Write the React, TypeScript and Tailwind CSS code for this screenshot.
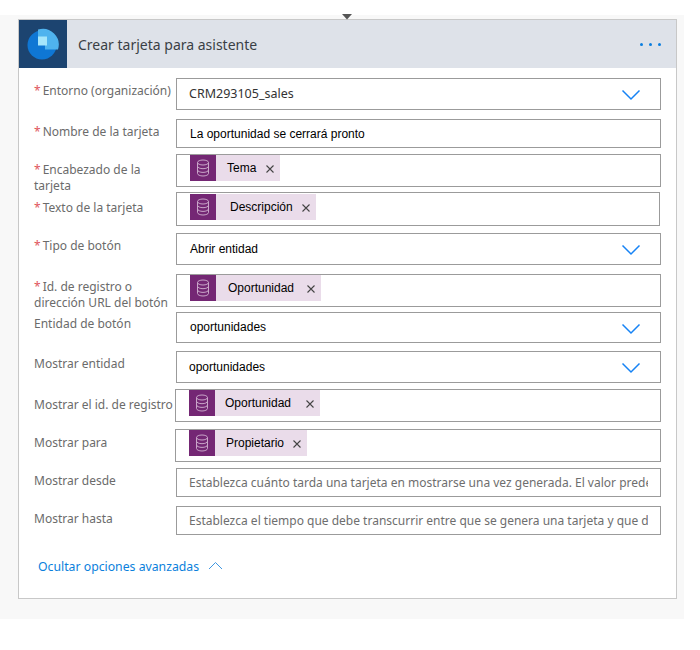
import type { ReactNode } from "react";

const labelFont = "font-['Noto_Sans',sans-serif] text-[12px] leading-4 text-[#6b6b6b]";
const valueFont = "font-['Liberation_Sans',Arial,sans-serif] text-[12px] text-black";

function Req() {
  return <span className="mr-[2px] text-[#e0555c]">*</span>;
}

function Chevron() {
  return (
    <svg width="20" height="12" viewBox="0 0 20 12" className="absolute top-[10px] right-[19px]" fill="none">
      <path d="M1.5 1.5 10 10l8.5-8.5" stroke="#1683f5" strokeWidth="1.5" />
    </svg>
  );
}

function DbIcon() {
  return (
    <svg width="14" height="18" viewBox="0 0 14 18" fill="none" stroke="#c9a6c9" strokeWidth="1">
      <ellipse cx="7" cy="3.5" rx="5.5" ry="2.5" />
      <path d="M1.5 3.5v11c0 1.4 2.5 2.5 5.5 2.5s5.5-1.1 5.5-2.5v-11" />
      <path d="M1.5 7.2c0 1.4 2.5 2.5 5.5 2.5s5.5-1.1 5.5-2.5" />
      <path d="M1.5 10.9c0 1.4 2.5 2.5 5.5 2.5s5.5-1.1 5.5-2.5" />
    </svg>
  );
}

function Chip({ text, className, pad }: { text: string; className: string; pad: string }) {
  return (
    <div className={`flex h-[26px] items-stretch bg-[#eadcea] ${className}`}>
      <div className="flex w-[26px] shrink-0 items-center justify-center bg-[#742774]">
        <DbIcon />
      </div>
      <span className={`flex-1 ${pad} ${valueFont} leading-[27px] text-[#111]`}>{text}</span>
      <svg width="10" height="10" viewBox="0 0 10 10" className="mt-[9px] mr-[5px]" stroke="#444" strokeWidth="1.1">
        <path d="M1.5 1.5l7 7M8.5 1.5l-7 7" />
      </svg>
    </div>
  );
}

function Row({
  label,
  className,
  labelClass,
  boxClass = "",
  narrow = false,
  children,
}: {
  label: ReactNode;
  className: string;
  labelClass: string;
  boxClass?: string;
  narrow?: boolean;
  children: ReactNode;
}) {
  return (
    <div className={`flex ${className}`}>
      <div className={`${narrow ? "w-[141px]" : "w-[142px]"} shrink-0 ${labelClass} ${labelFont}`}>{label}</div>
      <div className={`relative min-w-0 flex-1 border border-[#9b9b9b] bg-white ${boxClass}`}>{children}</div>
    </div>
  );
}

export default function App() {
  return (
    <div className="relative h-[650px] w-[700px] overflow-hidden bg-white pt-[15px]">
      <svg width="10" height="6" viewBox="0 0 10 6" className="absolute top-[14px] left-[342px]">
        <path d="M0 0h10L5 5.5z" fill="#555" />
      </svg>
      <div className="h-[604px] w-[684px] bg-[#f8f8f8] pt-[4px] pl-[18px]">
        <div className="h-[580px] w-[659px] border border-[#c8c8c8] bg-white">
          <div className="flex h-[48px] items-center bg-[#dee2e9]">
            <div className="flex h-[48px] w-[48px] items-center justify-center bg-[#1c4470]">
              <svg width="32" height="32" viewBox="0 0 32 32">
                <circle cx="15" cy="17" r="14.5" fill="#0f77d4" />
                <path d="M11 1.5a16 16 0 0 1 20 20H18v-8h-7z" fill="#4fb3ee" />
                <path d="M11 8.5h9v9h-9z" fill="#a6e6fb" />
              </svg>
            </div>
            <span className="ml-[11px] font-['Noto_Sans',sans-serif] text-[14px] text-[#3a3f45]">
              Crear tarjeta para asistente
            </span>
            <div className="mr-[15px] ml-auto flex gap-[6px]">
              <span className="h-[3px] w-[3px] rounded-full bg-[#0a7ee0]" />
              <span className="h-[3px] w-[3px] rounded-full bg-[#0a7ee0]" />
              <span className="h-[3px] w-[3px] rounded-full bg-[#0a7ee0]" />
            </div>
          </div>

          <div className="w-[642px] pt-[10px] pl-[15px]">
            <Row className="h-[32px]" labelClass="pt-[5px] whitespace-nowrap" label={<><Req />Entorno (organización)</>}>
              <span className="ml-[12px] font-['Noto_Sans',sans-serif] text-[12.5px] leading-[29px] text-[#333]">
                CRM293105_sales
              </span>
              <Chevron />
            </Row>
            <Row className="mt-[9px] h-[29px]" labelClass="pt-[5px]" label={<><Req />Nombre de la tarjeta</>}>
              <span className={`ml-[13px] ${valueFont} leading-[29px]`}>La oportunidad se cerrará pronto</span>
            </Row>
            <Row className="mt-[6px] h-[33px]" labelClass="pt-[8px]" boxClass="pl-[13px]" label={<><Req />Encabezado de la tarjeta</>}>
              <Chip text="Tema" className="w-[90px]" pad="pl-[11px]" />
            </Row>
            <Row className="mt-[5px] h-[34px]" labelClass="pt-[8px]" boxClass="mr-[1px] pt-[1px] pl-[13px]" label={<><Req />Texto de la tarjeta</>}>
              <Chip text="Descripción" className="w-[126px]" pad="pl-[14px]" />
            </Row>
            <Row className="mt-[7px] h-[32px]" labelClass="pt-[5px]" label={<><Req />Tipo de botón</>}>
              <span className={`ml-[13px] ${valueFont} leading-[30px]`}>Abrir entidad</span>
              <Chevron />
            </Row>
            <Row className="mt-[9px] h-[33px]" labelClass="pt-[5px]" boxClass="pl-[13px]" label={<><Req />Id. de registro o dirección URL del botón</>}>
              <Chip text="Oportunidad" className="w-[131px]" pad="pl-[12px]" />
            </Row>
            <Row className="mt-[5px] h-[31px]" labelClass="pt-[4px]" label="Entidad de botón">
              <span className={`ml-[13px] ${valueFont} leading-[27px]`}>oportunidades</span>
              <Chevron />
            </Row>
            <Row className="mt-[8px] h-[32px]" labelClass="pt-[5px]" label="Mostrar entidad">
              <span className={`ml-[12px] ${valueFont} leading-[31px]`}>oportunidades</span>
              <Chevron />
            </Row>
            <Row narrow className="mt-[6px] h-[33px]" labelClass="pt-[8px]" boxClass="pl-[13px]" label="Mostrar el id. de registro">
              <Chip text="Oportunidad" className="w-[131px]" pad="pl-[10px]" />
            </Row>
            <Row narrow className="mt-[7px] h-[33px]" labelClass="pt-[6px]" boxClass="pl-[13px]" label="Mostrar para">
              <Chip text="Propietario" className="w-[118px]" pad="pl-[11px]" />
            </Row>
            <Row className="mt-[6px] h-[29px]" labelClass="pt-[5px]" label="Mostrar desde">
              <div className="mr-[12px] ml-[12px] overflow-hidden font-['Noto_Sans',sans-serif] text-[12px] leading-[28px] whitespace-nowrap text-[#6e6e6e]">
                Establezca cuánto tarda una tarjeta en mostrarse una vez generada. El valor predeterminado es inmediato.
              </div>
            </Row>
            <Row className="mt-[9px] h-[29px]" labelClass="pt-[5px]" label="Mostrar hasta">
              <div className="mr-[12px] ml-[12px] overflow-hidden font-['Noto_Sans',sans-serif] text-[12px] leading-[28px] whitespace-nowrap text-[#6e6e6e]">
                Establezca el tiempo que debe transcurrir entre que se genera una tarjeta y que deja de mostrarse.
              </div>
            </Row>

            <div className="mt-[23px] flex items-center pl-[4px]">
              <span className="font-['Noto_Sans',sans-serif] text-[12.25px] leading-[18px] text-[#0a7fdc]">
                Ocultar opciones avanzadas
              </span>
              <svg width="15" height="9" viewBox="0 0 15 9" className="mb-[3px] ml-[9px]" fill="none">
                <path d="M1 8l6.5-6.5L14 8" stroke="#3f97e2" strokeWidth="1" />
              </svg>
            </div>
          </div>
        </div>
      </div>
    </div>
  );
}
